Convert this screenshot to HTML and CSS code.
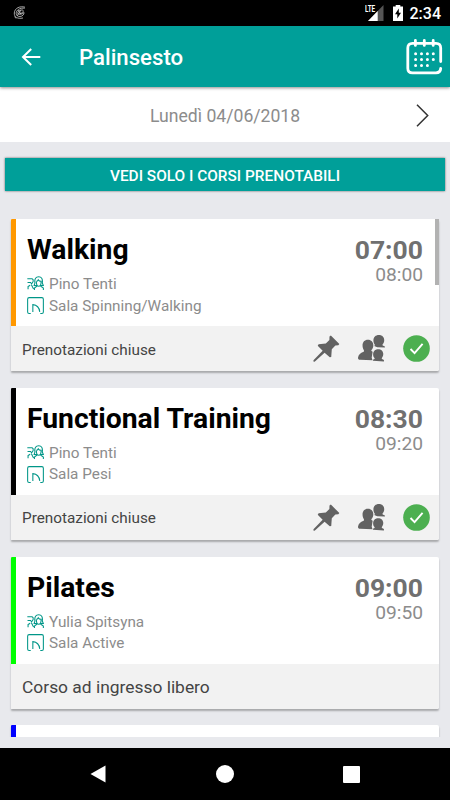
FILE: index.html
```html
<!DOCTYPE html>
<html lang="it">
<head>
  <meta charset="UTF-8">
  <meta name="viewport" content="width=device-width, initial-scale=1">
  <title>Palinsesto</title>
  <link rel="stylesheet" href="styles.css">
</head>
<body>
  <!-- shared icons -->
  <svg class="sprite" width="0" height="0">
    <symbol id="trainer" viewBox="0 0 16 16">
      <path d="M.3 3.500h4.500q1.500.8 1 2.500T4 8.200M.5 7h2.800l1.200 1.500M1 13.500v-2.600l2-1.300M4 9l2.200 4.200"/>
      <path d="M7.500 7.500C6.800 3.500 8.500 1.600 11 1.600S15 3.500 14.400 7.500M8.800 6c0 3 .8 4.500 2.200 4.500s2.300-1.500 2.300-4.500q-1.900 0-2.700-1.400Q9.800 6 8.800 6M7.500 7.500l-.8 2.300 2.500.2M14.400 7.500l.9 2.300-2.500.2M7 14.200v-2l2.500-1.700M15.400 14.200v-2l-2.700-1.700"/>
    </symbol>
    <symbol id="room" viewBox="0 0 16 16">
      <path d="M3.500 15.500H2Q.6 15.500.6 14V2Q.6.600 2 .6h12Q15.400.6 15.400 2v12Q15.400 15.500 14 15.500h-1.500M5.500 14V7.200q5.800.4 6.500 6.800"/>
    </symbol>
    <symbol id="pin" viewBox="0 0 28 28">
      <path d="M18.500.6 27.300 9.400 26.300 10.600 23.200 11 19.500 14.800 18.900 22.700 17.400 23.200 12 18.300 1.700 27.800.4 27.600.5 26.300 10 16.300 4.900 11.200 5.800 9.500 13.300 8.800 17 5.200 17.100 1.500Z"/>
    </symbol>
    <symbol id="people" viewBox="0 0 28 28">
      <path d="M10.300 4.800c3.400 0 5.600 2.500 5.600 5.700 0 2.100-.8 3.800-2.100 5.200l.2.900 1.200.7-1 6.300.9 2.600-12.900-.5C.3 25.600-.2 24.800.1 23c.4-3.100 3.200-4.800 5.900-5.700l.2-1.500c-1-1.300-1.500-3-1.500-5.100 0-3.500 2.100-5.900 5.600-5.900z"/>
      <path d="M21.700.1c3.400 0 5.500 2.200 5.500 5.300 0 1.900-.8 3.400-1.900 4.600l.3.900 2.300 1V13l-7.900-.4-3.200-1.100.8-1.200c-1-1.200-1.600-2.800-1.600-4.600 0-3.300 2.300-5.600 5.700-5.600z"/>
      <path d="M20.800 14.800c3.300 0 5.400 2.100 5.400 5 0 1.800-.7 3.100-1.600 4.200l.3.900 2 1v1.600l-11.400-.7v-1.200l1.600-.7.200-.9c-1-1-1.600-2.200-1.600-3.900 0-3 1.900-5.300 5.100-5.300z"/>
    </symbol>
    <symbol id="check" viewBox="0 0 28 28">
      <circle cx="14" cy="14" r="13.800" fill="#4caf50"/>
      <path d="M7.800 14.500 12 18.800 20.300 9.300" fill="none" stroke="#fff" stroke-width="2"/>
    </symbol>
  </svg>

  <div class="phone">
    <div class="status-bar">
      <svg class="notification" width="14" height="14" viewBox="0 0 14 14">
        <path d="M12 1.200C7-.2 1.600 2 1.300 7c-.2 4 3 6.200 8.700 5M11.800 2.200C7 1.600 3 4 3.200 7.500c.2 2 1.500 3 3.800 3 2.600-.1 4.200-2.200 4-4.100C8.800 8.700 5.400 9 4.800 7.300 4.300 5.500 7.300 3.500 9.500 4c2 .8-.4 4-3 3.500M1.600 10.500l1.500 2M5 4l3 4M4 10l4-6"/>
      </svg>
      <div class="signal">
        <svg width="20" height="16" viewBox="0 0 20 16">
          <path d="M4 16 19.500 0v16z" fill="#555"/>
          <path d="M4 16 13.700 6v10z" fill="#fff"/>
          <path d="M0 0h11.500v8H0z" fill="#000"/>
        </svg>
        <span class="lte">LTE</span>
      </div>
      <svg class="battery" width="10" height="16" viewBox="0 0 10 16">
        <path d="M0 1.500h2.700V0h4.600v1.500H10V16H0z" fill="#fff"/>
        <path d="M5.800 3.500 2 9.200h2.300v4.300L8 7.800H5.800z" fill="#000"/>
      </svg>
      <span class="clock">2:34</span>
    </div>

    <header class="app-bar">
      <svg class="back" width="20" height="18" viewBox="0 0 20 18">
        <path d="M10.200 1 2 9l8.200 8M2 9h17.300"/>
      </svg>
      <h1>Palinsesto</h1>
      <svg class="calendar" width="37" height="36" viewBox="0 0 37 36">
        <path d="M34.700 22.500V9q0-4.600-4.700-4.600H6.500Q1.800 4.400 1.800 9v20.200q0 4.600 4.700 4.600H30q4.500 0 4.700-4.400M9.400 1.400v5M18.300 1.400v5M27.200 1.400v5"/>
        <path class="dots" d="M9.600 14.700h.01M15.500 14.700h.01M21.400 14.700h.01M27.300 14.700h.01M9.600 20.500h.01M15.500 20.500h.01M21.400 20.500h.01M27.300 20.500h.01M9.600 26.400h.01M15.500 26.400h.01M21.400 26.400h.01"/>
      </svg>
    </header>

    <div class="date-bar">
      <span class="date">Lunedì 04/06/2018</span>
      <svg class="next" width="13" height="23" viewBox="0 0 13 23">
        <path d="M1 .8 11.700 11.500 1 22.200"/>
      </svg>
    </div>

    <button class="filter-btn">VEDI SOLO I CORSI PRENOTABILI</button>

    <div class="list">
      <div class="scrollbar"></div>

      <div class="card">
        <div class="card-body walking">
          <div class="info">
            <h2>Walking</h2>
            <p><svg class="line-icon"><use href="#trainer"/></svg>Pino Tenti</p>
            <p><svg class="line-icon"><use href="#room"/></svg>Sala Spinning/Walking</p>
          </div>
          <div class="times"><b>07:00</b><span>08:00</span></div>
        </div>
        <div class="card-footer">
          <span class="closed">Prenotazioni chiuse</span>
          <svg class="icon"><use href="#pin"/></svg>
          <svg class="icon"><use href="#people"/></svg>
          <svg class="icon"><use href="#check"/></svg>
        </div>
      </div>

      <div class="card">
        <div class="card-body functional">
          <div class="info">
            <h2>Functional Training</h2>
            <p><svg class="line-icon"><use href="#trainer"/></svg>Pino Tenti</p>
            <p><svg class="line-icon"><use href="#room"/></svg>Sala Pesi</p>
          </div>
          <div class="times"><b>08:30</b><span>09:20</span></div>
        </div>
        <div class="card-footer">
          <span class="closed">Prenotazioni chiuse</span>
          <svg class="icon"><use href="#pin"/></svg>
          <svg class="icon"><use href="#people"/></svg>
          <svg class="icon"><use href="#check"/></svg>
        </div>
      </div>

      <div class="card">
        <div class="card-body pilates">
          <div class="info">
            <h2>Pilates</h2>
            <p><svg class="line-icon"><use href="#trainer"/></svg>Yulia Spitsyna</p>
            <p><svg class="line-icon"><use href="#room"/></svg>Sala Active</p>
          </div>
          <div class="times"><b>09:00</b><span>09:50</span></div>
        </div>
        <div class="card-footer">
          <span class="free">Corso ad ingresso libero</span>
        </div>
      </div>

      <div class="card">
        <div class="card-body next-course"></div>
      </div>
    </div>

    <nav class="nav-bar">
      <svg width="16" height="18" viewBox="0 0 16 18"><path d="M15.500.5v17L.5 9z"/></svg>
      <svg width="18" height="18" viewBox="0 0 18 18"><circle cx="9" cy="9" r="9"/></svg>
      <svg width="17" height="17" viewBox="0 0 17 17"><rect width="17" height="17" rx="1"/></svg>
    </nav>
  </div>
</body>
</html>
```

FILE: styles.css
```css
* {
  box-sizing: border-box;
}

html, body {
  margin: 0;
  padding: 0;
  font-family: Roboto, sans-serif;
}

h1, h2, p {
  margin: 0;
}

svg {
  display: block;
  flex: none;
}

.sprite {
  position: absolute;
}

.phone {
  width: 450px;
  height: 800px;
  background-color: #e8e9ed;
  display: flex;
  flex-direction: column;
  overflow: hidden;
}

/* status bar */
.status-bar {
  height: 26px;
  flex: none;
  background-color: #000;
  color: #fff;
  display: flex;
  align-items: center;
  padding: 0 9px 0 13px;
}

.notification {
  fill: none;
  stroke: #ccc;
  stroke-width: 0.8;
  margin-right: auto;
}

.signal {
  position: relative;
  margin-right: 9px;
}

.lte {
  position: absolute;
  left: 1px;
  top: 0;
  font-size: 9px;
  line-height: 8px;
  font-weight: bold;
  transform: scaleX(0.7);
  transform-origin: left;
}

.battery {
  margin-right: 7px;
}

.clock {
  font-size: 16px;
  font-weight: 500;
  line-height: 26px;
  padding-top: 2px;
}

/* app bar */
.app-bar {
  height: 61px;
  flex: none;
  background-color: #009f99;
  color: #fff;
  display: flex;
  align-items: center;
  padding: 0 7px 0 21px;
  box-shadow: 0 1px 3px rgba(0, 0, 0, 0.45);
  z-index: 1;
}

.app-bar h1 {
  font-size: 22.2px;
  font-weight: 500;
  margin-left: 38px;
  margin-right: auto;
  padding-top: 1px;
}

.back {
  fill: none;
  stroke: #fff;
  stroke-width: 2;
}

.calendar {
  fill: none;
  stroke: #fff;
  stroke-width: 2.8;
  stroke-linecap: round;
}

.dots {
  stroke-width: 3;
}

/* date selector */
.date-bar {
  height: 55px;
  flex: none;
  background-color: #fff;
  display: flex;
  align-items: center;
  padding: 1px 21px 0 150px;
}

.date {
  flex: 1;
  font-size: 17.6px;
  padding-top: 1px;
  color: #8c8c8c;
}

.next {
  fill: none;
  stroke: #333;
  stroke-width: 1.5;
}

.filter-btn {
  height: 33px;
  flex: none;
  margin: 16px 5px 28px;
  padding: 2px 0 0;
  border: none;
  background-color: #009f99;
  color: #fff;
  font-family: inherit;
  font-size: 15.4px;
  font-weight: 500;
  box-shadow: 0 0 2px rgba(0, 0, 0, 0.6);
}

/* courses */
.list {
  position: relative;
  height: 518px;
  flex: none;
  margin: 0 7px;
  padding: 0 4px;
  overflow: hidden;
}

.scrollbar {
  position: absolute;
  top: 0;
  right: 4px;
  width: 4px;
  height: 66px;
  background-color: #b2b2b2;
  z-index: 1;
}

.card {
  height: 152.25px;
  margin-bottom: 16.5px;
  background-color: #fff;
  border-radius: 1px 2px 2px 1px;
  box-shadow: 0 2px 2px rgba(0, 0, 0, 0.28);
  overflow: hidden;
}

.card-body {
  height: 107px;
  display: flex;
  justify-content: space-between;
  border-left: 5px solid;
  padding: 14px 16px 0 11px;
}

.walking {
  border-color: #ff9800;
}

.functional {
  border-color: #000;
}

.pilates {
  border-color: #0f0;
}

.next-course {
  border-color: #00f;
}

.info h2 {
  font-size: 28.3px;
  line-height: 34px;
  color: #000;
  margin-bottom: 7px;
}

.info p {
  display: flex;
  align-items: center;
  font-size: 15.3px;
  line-height: 21.5px;
  color: #8c8c8c;
}

.line-icon {
  width: 17px;
  height: 17px;
  margin: -2px 5px 0 0;
  fill: none;
  stroke: #009688;
}

.times {
  display: flex;
  flex-direction: column;
  align-items: flex-end;
  padding-top: 1px;
}

.times b {
  font-size: 26.5px;
  line-height: 31px;
  color: #707070;
}

.times span {
  font-size: 19.2px;
  line-height: 19px;
  color: #8c8c8c;
}

.card-footer {
  height: 45.25px;
  background-color: #f2f2f2;
  color: #444;
  display: flex;
  align-items: center;
  gap: 18px;
  padding: 0 9px 0 11px;
}

.closed {
  flex: 1;
  padding-top: 2px;
  font-size: 15.3px;
}

.free {
  padding-top: 1px;
  font-size: 17.4px;
}

.icon {
  width: 27px;
  height: 27px;
  fill: #626262;
}

/* android buttons */
.nav-bar {
  flex: 1;
  margin-top: 11px;
  background-color: #000;
  fill: #fff;
  display: flex;
  align-items: center;
  justify-content: space-between;
  padding: 0 90px;
}
```
